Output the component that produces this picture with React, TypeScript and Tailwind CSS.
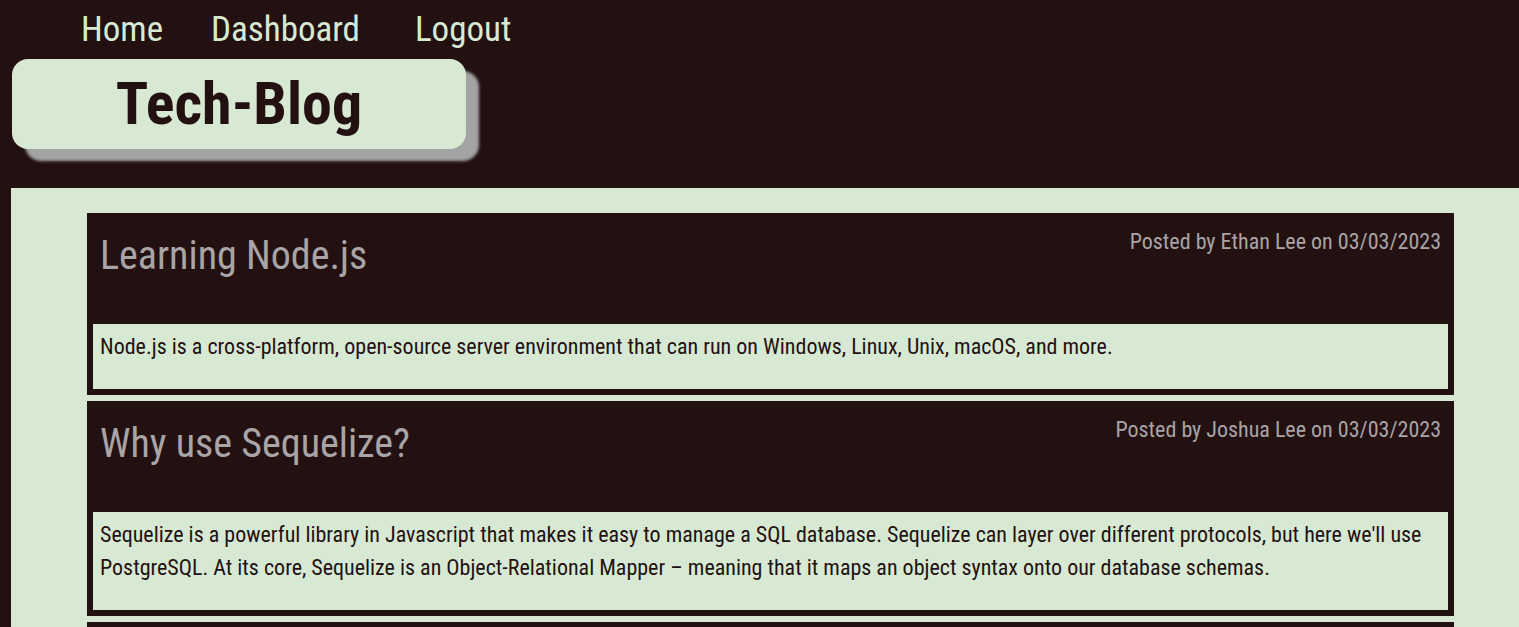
import React from "react";

const posts = [
  {
    title: "Learning Node.js",
    author: "Ethan Lee",
    date: "03/03/2023",
    body: "Node.js is a cross-platform, open-source server environment that can run on Windows, Linux, Unix, macOS, and more.",
  },
  {
    title: "Why use Sequelize?",
    author: "Joshua Lee",
    date: "03/03/2023",
    body: "Sequelize is a powerful library in Javascript that makes it easy to manage a SQL database. Sequelize can layer over different protocols, but here we'll use PostgreSQL. At its core, Sequelize is an Object-Relational Mapper – meaning that it maps an object syntax onto our database schemas.",
  },
  {
    title: "What is MVC?",
    author: "Ethan Lee",
    date: "03/04/2023",
    body: "MVC is an architectural pattern that separates an application into three main logical components: the model, the view, and the controller.",
  },
];

export default function App() {
  return (
    <div className="min-h-screen bg-[#231112] font-['Roboto',sans-serif] [font-stretch:75%]">
      <header className="h-[188px]">
        <nav className="flex pt-[7px] pl-[81px] text-[35px] leading-[46px] text-[#d8e9d3]">
          <a className="mr-[48px]">Home</a>
          <a className="mr-[55px]">Dashboard</a>
          <a>Logout</a>
        </nav>
        <div className="ml-[12px] mt-[6px] flex h-[90px] w-[454px] items-center justify-center rounded-[16px] bg-[#d8e9d3] shadow-[13px_12px_3px_#a3a3a3]">
          <h1 className="text-[60px] font-bold leading-[70px] text-[#231112]">Tech-Blog</h1>
        </div>
      </header>
      <main className="ml-[11px] bg-[#d8e9d3] pt-[25px] pb-[40px]">
        <div className="ml-[76px] mr-[65px] flex flex-col gap-[6px]">
          {posts.map((post, i) => (
            <article key={i} className="bg-[#231112] p-[6px]">
              <div className="flex h-[105px] items-start justify-between px-[7px]">
                <h2 className="mt-[13px] text-[40px] leading-[48px] text-[#a9a4a5]">
                  {post.title}
                </h2>
                <span className="mt-[8px] text-[22px] leading-[30px] text-[#a9a4a5]">
                  Posted by {post.author} on {post.date}
                </span>
              </div>
              <div className="bg-[#d8e9d3] px-[7px] pt-[6px] pb-[26px] text-[22px] leading-[33px] text-[#231112]">
                <p>{post.body}</p>
              </div>
            </article>
          ))}
        </div>
      </main>
    </div>
  );
}
